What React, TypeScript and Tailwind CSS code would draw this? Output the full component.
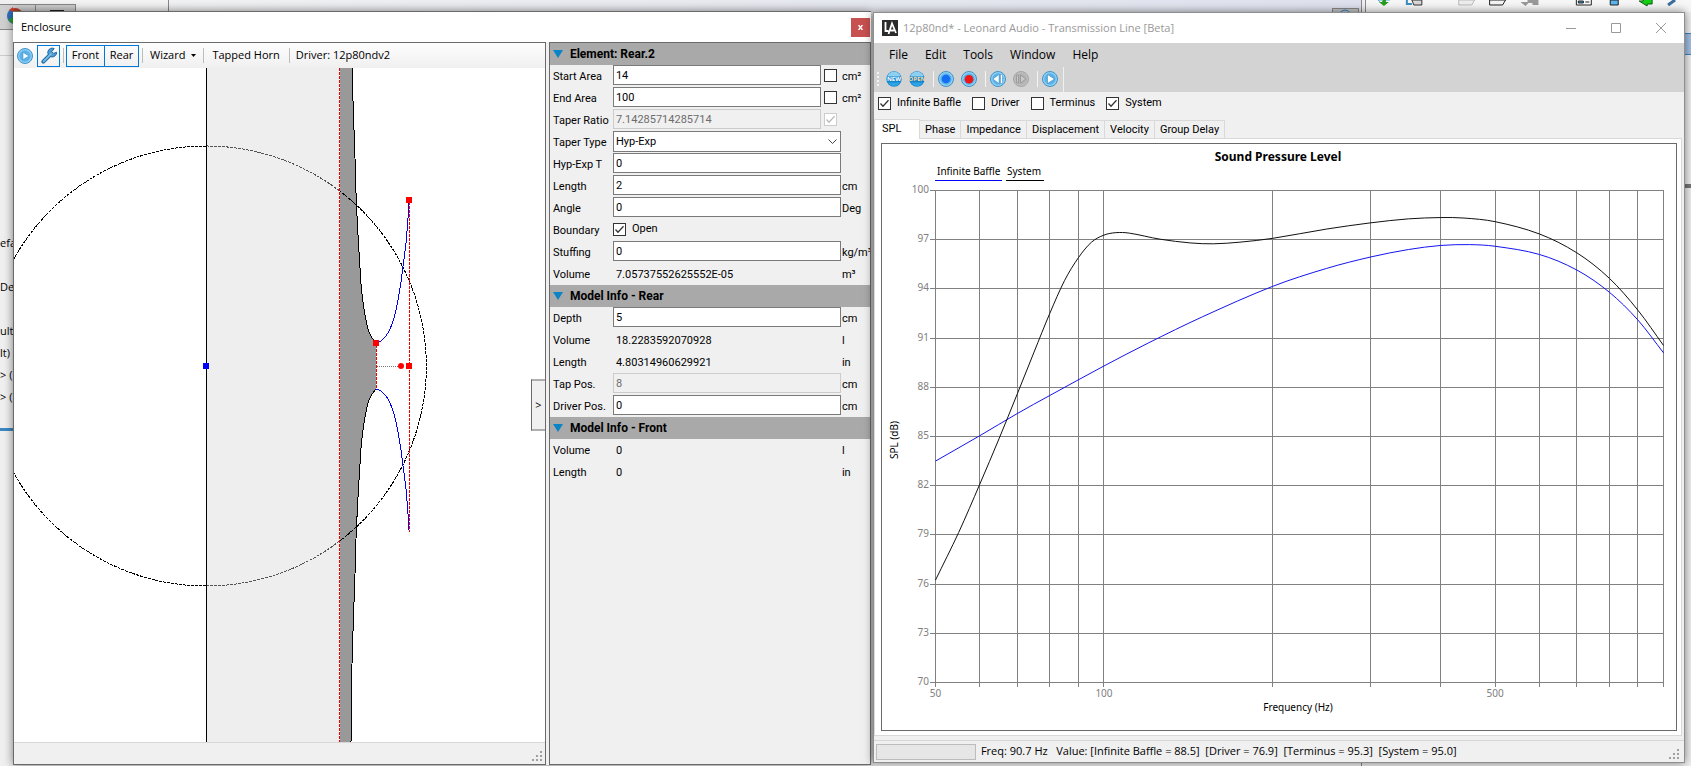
import React from 'react';

type Point = [number, number];

// smooth path through a list of points (Catmull-Rom)
function smooth(pts: Point[]) {
  let d = `M${pts[0][0]} ${pts[0][1]}`;
  for (let i = 0; i < pts.length - 1; i++) {
    const p0 = pts[i - 1] || pts[i];
    const p1 = pts[i];
    const p2 = pts[i + 1];
    const p3 = pts[i + 2] || p2;
    d += ` C${p1[0] + (p2[0] - p0[0]) / 6} ${p1[1] + (p2[1] - p0[1]) / 6} ${p2[0] - (p3[0] - p1[0]) / 6} ${p2[1] - (p3[1] - p1[1]) / 6} ${p2[0]} ${p2[1]}`;
  }
  return d;
}

// same idea for y = f(x) data with uneven steps in x
function smoothCurve(pts: Point[]) {
  const slope = pts.map((_, i) => {
    const a = pts[i - 1] || pts[i];
    const b = pts[i + 1] || pts[i];
    return (b[1] - a[1]) / (b[0] - a[0]);
  });
  let d = `M${pts[0][0]} ${pts[0][1]}`;
  for (let i = 0; i < pts.length - 1; i++) {
    const [x1, y1] = pts[i];
    const [x2, y2] = pts[i + 1];
    const h = (x2 - x1) / 3;
    d += ` C${x1 + h} ${y1 + slope[i] * h} ${x2 - h} ${y2 - slope[i + 1] * h} ${x2} ${y2}`;
  }
  return d;
}

/* ---------- shared controls ---------- */

interface CheckProps {
  id: string;
  checked?: boolean;
  disabled?: boolean;
  label?: string;
  ariaLabel?: string;
}

function Check({ id, checked, disabled, label, ariaLabel }: CheckProps) {
  return (
    <span className="flex items-center gap-[6px]">
      <span className="relative flex">
        <input
          id={id}
          type="checkbox"
          defaultChecked={checked}
          disabled={disabled}
          aria-label={ariaLabel}
          className="peer size-[13px] appearance-none border border-[#333] bg-white disabled:border-[#ccc]"
        />
        <svg viewBox="0 0 13 13" className="pointer-events-none absolute inset-0 hidden size-[13px] peer-checked:block">
          <path d="M2.5 6.5 L5 9.2 L10.5 3.3" fill="none" stroke={disabled ? '#bbb' : '#333'} strokeWidth="1.3" />
        </svg>
      </span>
      {label && <label htmlFor={id}>{label}</label>}
    </span>
  );
}

function Grip() {
  return (
    <svg width="11" height="11" viewBox="0 0 11 11" fill="#a0a0a0" shapeRendering="crispEdges">
      <path d="M8 0h2v2h-2zM4 4h2v2h-2zM8 4h2v2h-2zM0 8h2v2h-2zM4 8h2v2h-2zM8 8h2v2h-2z" />
    </svg>
  );
}

function Orb({ grey, children }: { grey?: boolean; children: React.ReactNode }) {
  return (
    <svg width="16" height="16" viewBox="0 0 16 16">
      <circle cx="8" cy="8" r="7.5" fill={grey ? '#bdbdbd' : '#8fd0f4'} stroke={grey ? '#a5a5a5' : '#3f93c9'} />
      <circle cx="8" cy="8" r="5.7" fill={grey ? '#b4b4b4' : '#5ab2e6'} />
      {children}
    </svg>
  );
}

function TextOrb({ text, color }: { text: string; color: string }) {
  return (
    <svg width="16" height="16" viewBox="0 0 16 16">
      <circle cx="8" cy="8" r="7.7" fill="#1585cc" />
      <path d="M1.2 5.5a7.2 7.2 0 0 1 13.6 0z" fill="#8fd0f0" />
      <path d="M2 11.5a7 7 0 0 0 12 0z" fill="#2fa4e4" />
      <text x="8" y="10" textAnchor="middle" fontSize="6" fontWeight="bold" fill={color}>{text}</text>
    </svg>
  );
}

/* ---------- enclosure window ---------- */

const hornUpper: Point[] = [[337, -78], [338, 0], [341, 90], [342, 125], [344, 167], [346, 200], [348, 226], [353, 257], [357, 268], [362, 275]];
const mouthUpper: Point[] = [[362, 275], [367, 273], [374, 265], [380, 250], [384, 232], [387, 214], [389, 198], [392, 175], [394, 150], [395, 134]];
const mirror = (pts: Point[]): Point[] => pts.map(([x, y]) => [x, 596 - y]);

function EnclosureDrawing() {
  const upper = smooth(hornUpper);
  const lower = smooth(mirror(hornUpper).reverse());
  return (
    <svg viewBox="0 0 531 674" preserveAspectRatio="xMinYMid slice" className="absolute inset-0 size-full" shapeRendering="crispEdges" fill="none">
      <rect x="192" y="-100" width="133" height="900" fill="#eeeeee" />
      <path d={`M326 -78 L337 -78 ${upper.replace('M', 'L')} L${lower.slice(1)} L326 675 Z`} fill="#999999" />
      <path d={upper} stroke="#000" />
      <path d={lower} stroke="#000" />
      <path d="M325 122.500 A220 220 0 0 1 325 473.500 M192 518 A220 220 0 0 1 192 78" stroke="#000" strokeDasharray="3 1" />
      <path d="M192 78 A220 220 0 0 1 325 122.500 M325 473.500 A220 220 0 0 1 192 518" stroke="#555" strokeDasharray="3 1" />
      <path d="M192.500 -100 V800" stroke="#000" />
      <path d="M325.500 -100 V800" stroke="#fff" />
      <path d="M325.500 -100 V800 M362.500 277 V321 M395.500 134 V464" stroke="#f00000" strokeDasharray="3 1" />
      <path d={smooth(mouthUpper)} stroke="#0000f0" />
      <path d={smooth(mirror(mouthUpper))} stroke="#0000f0" />
      <path d="M363 298.500 H385" stroke="#777" strokeDasharray="1 1" />
      <path d="M359 272h6v6h-6zM392 129h6v6h-6zM392 295h6v6h-6z" fill="#ff0000" />
      <circle cx="387" cy="298" r="3" fill="#ff0000" shapeRendering="auto" />
      <rect x="189" y="295" width="6" height="6" fill="#0000ff" />
    </svg>
  );
}

function Separator() {
  return <span className="h-[15px] w-px bg-[#bdbdbd]" />;
}

function EnclosureToolbar() {
  return (
    <div className="flex h-[25px] items-center bg-gradient-to-b from-[#fdfdfd] to-[#f0f0f0] pl-[3px] text-[11px]">
      <button aria-label="Run" className="mr-1">
        <Orb>
          <path d="M6 4.5 L12 8 L6 11.5Z" fill="#fff" stroke="#2f86bd" strokeWidth="0.5" />
        </Orb>
      </button>
      <button aria-label="Settings" className="mr-[3px] flex h-[22px] w-[23px] items-center justify-center border border-[#0078d7]">
        <svg width="18" height="18" viewBox="0 0 18 18">
          <path d="M3.3 14.7 L11 7" stroke="#1f6ba5" strokeWidth="4" strokeLinecap="round" />
          <path d="M14.2 1.6 A4.4 4.4 0 1 0 16.6 5.2 L13.6 6.4 L11.8 4.6 Z" fill="#4e9bd1" stroke="#1f6ba5" />
          <path d="M3.6 14.4 L11 7" stroke="#74b8e4" strokeWidth="2" strokeLinecap="round" />
        </svg>
      </button>
      <Separator />
      <button className="ml-[2px] h-[22px] w-[39px] border border-[#0078d7]">Front</button>
      <button className="-ml-px h-[22px] w-[35px] border border-[#0078d7]">Rear</button>
      <span className="w-[3px]" />
      <Separator />
      <button className="mx-[7px] flex items-center gap-[6px]">
        Wizard
        <svg width="5" height="3" viewBox="0 0 5 3"><path d="M0 0h5L2.5 3z" fill="#000" /></svg>
      </button>
      <Separator />
      <button className="mr-[9px] ml-2">Tapped Horn</button>
      <Separator />
      <span className="ml-[6px]">Driver: 12p80ndv2</span>
    </div>
  );
}

interface Field {
  label: string;
  value: string;
  unit?: string;
  kind?: 'input' | 'text' | 'select' | 'check';
  lock?: boolean;
  disabled?: boolean;
}

const elementFields: Field[] = [
  { label: 'Start Area', value: '14', unit: 'cm²', lock: true },
  { label: 'End Area', value: '100', unit: 'cm²', lock: true },
  { label: 'Taper Ratio', value: '7.14285714285714', lock: true, disabled: true },
  { label: 'Taper Type', value: 'Hyp-Exp', kind: 'select' },
  { label: 'Hyp-Exp T', value: '0' },
  { label: 'Length', value: '2', unit: 'cm' },
  { label: 'Angle', value: '0', unit: 'Deg' },
  { label: 'Boundary', value: 'Open', kind: 'check' },
  { label: 'Stuffing', value: '0', unit: 'kg/m³' },
  { label: 'Volume', value: '7.05737552625552E-05', unit: 'm³', kind: 'text' },
];

const rearFields: Field[] = [
  { label: 'Depth', value: '5', unit: 'cm' },
  { label: 'Volume', value: '18.2283592070928', unit: 'l', kind: 'text' },
  { label: 'Length', value: '4.80314960629921', unit: 'in', kind: 'text' },
  { label: 'Tap Pos.', value: '8', unit: 'cm', disabled: true },
  { label: 'Driver Pos.', value: '0', unit: 'cm' },
];

const frontFields: Field[] = [
  { label: 'Volume', value: '0', unit: 'l', kind: 'text' },
  { label: 'Length', value: '0', unit: 'in', kind: 'text' },
];

function FieldRow({ field, group }: { field: Field; group: string }) {
  const id = `${group}-${field.label.replace(/[^A-Za-z]/g, '').toLowerCase()}`;
  const kind = field.kind || 'input';
  return (
    <div className="grid h-[22px] grid-cols-[63px_1fr_29px] whitespace-nowrap">
      {kind === 'text' ? (
        <span className="pt-[5px] pl-[3px]">{field.label}</span>
      ) : (
        <label htmlFor={id} className="pt-[5px] pl-[3px]">{field.label}</label>
      )}
      <div className="flex min-w-0 items-start gap-[3px]">
        {kind === 'input' && (
          <input
            id={id}
            defaultValue={field.value}
            disabled={field.disabled}
            className="h-5 min-w-0 flex-1 border border-[#7a7a7a] bg-white px-[2px] disabled:border-[#ccc] disabled:bg-[#f0f0f0] disabled:text-[#6d6d6d]"
          />
        )}
        {field.lock && (
          <span className="mr-[4px] pt-1">
            <Check id={`${id}-lock`} ariaLabel={`Lock ${field.label}`} checked={field.disabled} disabled={field.disabled} />
          </span>
        )}
        {kind === 'select' && (
          <span className="relative flex-1">
            <select id={id} className="block h-[21px] w-full appearance-none border border-[#7a7a7a] bg-white px-[2px]">
              <option>{field.value}</option>
            </select>
            <svg width="9" height="6" viewBox="0 0 9 6" className="pointer-events-none absolute top-2 right-1">
              <path d="M0.5 0.5 L4.5 4.5 L8.5 0.5" fill="none" stroke="#444" />
            </svg>
          </span>
        )}
        {kind === 'check' && <span className="pt-[3px]"><Check id={id} checked label={field.value} /></span>}
        {kind === 'text' && <span className="pt-[5px] pl-[3px]">{field.value}</span>}
      </div>
      <span className="pt-[5px] pl-px">{field.unit}</span>
    </div>
  );
}

function Section({ title, fields, group }: { title: string; fields: Field[]; group: string }) {
  return (
    <section>
      <h2 className="flex h-[22px] items-center gap-[7px] bg-[#a9a9a9] pl-[3px] text-[12px] font-bold">
        <svg width="10" height="8" viewBox="0 0 10 8"><path d="M0 0h10L5 8z" fill="#0b84c6" /></svg>
        {title}
      </h2>
      {fields.map((f) => <FieldRow key={f.label} field={f} group={group} />)}
    </section>
  );
}

function EnclosureWindow() {
  return (
    <section className="flex min-w-0 flex-[860] flex-col border-t border-[#6a6a6a] bg-[#f0f0f0] shadow-[0_0_9px_rgba(0,0,0,0.5)]">
      <header className="flex h-[30px] shrink-0 items-center justify-between bg-white pl-2 text-[11px]">
        <h1>Enclosure</h1>
        <button aria-label="Close" className="mr-px flex size-[19px] items-center justify-center bg-[#c75050] text-white">
          <svg width="5" height="5" viewBox="0 0 5 5"><path d="M0.5 0 L4.5 5 M4.5 0 L0.5 5" stroke="#fff" strokeWidth="1.4" /></svg>
        </button>
      </header>
      <div className="flex min-h-0 flex-1 gap-[3px]">
        <div className="flex min-w-0 flex-1 flex-col border border-[#6a6a6a]">
          <EnclosureToolbar />
          <div className="relative min-h-0 flex-1 overflow-hidden bg-white">
            <EnclosureDrawing />
            <button className="absolute top-1/2 right-0 h-[51px] w-[14px] -translate-y-1/2 border border-r-0 border-[#6a6a6a] bg-[#f0f0f0] text-[11px]">&gt;</button>
          </div>
          <div className="flex h-[22px] items-end justify-end border-t border-[#d7d7d7] pr-[2px] pb-[2px]">
            <Grip />
          </div>
        </div>
        <div className="w-[322px] overflow-hidden border border-[#6a6a6a] font-['Roboto',sans-serif] text-[11px] leading-[14px]">
          <Section title="Element: Rear.2" fields={elementFields} group="element" />
          <Section title="Model Info - Rear" fields={rearFields} group="rear" />
          <Section title="Model Info - Front" fields={frontFields} group="front" />
        </div>
      </div>
    </section>
  );
}

/* ---------- transmission line window ---------- */

const infiniteBaffle: Point[] = [
  [50, 83.5], [60, 85.05], [70, 86.4], [80, 87.5], [100, 89.3], [120, 90.7], [150, 92.3], [200, 94.15], [250, 95.25], [300, 95.95],
  [350, 96.4], [400, 96.65], [450, 96.7], [500, 96.6], [600, 96.1], [700, 95.15], [800, 93.8], [900, 92.1], [1000, 90.1],
];
const system: Point[] = [
  [50, 76.25], [55, 79.15], [60, 82.1], [65, 84.9], [70, 87.6], [75, 90.15], [80, 92.5], [85, 94.5], [90, 95.9], [95, 96.85], [100, 97.28],
  [105, 97.43], [111, 97.4], [126, 97.03], [143, 96.8], [157, 96.75], [175, 96.85], [200, 97.08], [250, 97.65], [300, 98.03], [350, 98.27],
  [400, 98.35], [440, 98.32], [500, 98.1], [600, 97.35], [700, 96.2], [800, 94.65], [900, 92.7], [1000, 90.55],
];
const freqLines = [50, 60, 70, 80, 90, 100, 200, 300, 400, 500, 600, 700, 800, 900, 1000];
const dbLines = [100, 97, 94, 91, 88, 85, 82, 79, 76, 73, 70];

const fx = (f: number) => 53.5 + (728 * Math.log(f / 50)) / Math.log(20);
const dy = (db: number) => 46.5 + (100 - db) * 16.4;
const snap = (v: number) => Math.floor(v) + 0.5;
const toPlot = (pts: Point[]): Point[] => pts.map(([f, db]) => [fx(f), dy(db)]);

function SplChart() {
  return (
    <svg viewBox="0 0 794 586" className="absolute inset-0 size-full font-['Noto_Sans',sans-serif]">
      <text x="396" y="17" textAnchor="middle" fontSize="12" fontWeight="700">Sound Pressure Level</text>
      <text x="55" y="31" fontSize="10">Infinite Baffle</text>
      <text x="125" y="31" fontSize="10">System</text>
      <path d="M53 36.500 H120" stroke="#00f" />
      <path d="M124 36.500 H162" stroke="#000" />
      <g stroke="#808080" shapeRendering="crispEdges">
        {dbLines.map((db) => <path key={db} d={`M48 ${snap(dy(db))} H782`} />)}
        {freqLines.map((f) => <path key={f} d={`M${snap(fx(f))} 46 V543`} />)}
      </g>
      <g fill="#808080" fontSize="10">
        {dbLines.map((db) => <text key={db} x="47" y={snap(dy(db)) + 2} textAnchor="end">{db}</text>)}
        {[50, 100, 500].map((f) => <text key={f} x={fx(f)} y="553" textAnchor="middle">{f}</text>)}
      </g>
      <path d={smoothCurve(toPlot(infiniteBaffle))} fill="none" stroke="#1414f0" />
      <path d={smoothCurve(toPlot(system))} fill="none" stroke="#111" />
      <text x="416" y="567" textAnchor="middle" fontSize="10">Frequency (Hz)</text>
      <text transform="translate(16 296) rotate(-90)" textAnchor="middle" fontSize="10">SPL (dB)</text>
    </svg>
  );
}

function ToolSep() {
  return <span className="h-4 w-px bg-[#f4f4f4]" />;
}

function AudioWindow() {
  const tabs = ['Phase', 'Impedance', 'Displacement', 'Velocity', 'Group Delay'];
  return (
    <section className="mt-px mb-[2px] flex min-w-0 flex-[812] flex-col border border-[#8e8e8e] bg-[#f0f0f0] shadow-[0_0_9px_rgba(0,0,0,0.5)]">
      <header className="flex h-[30px] shrink-0 items-center bg-white pl-2 text-[11px] text-[#999]">
        <svg width="16" height="16" viewBox="0 0 16 16" className="mr-[5px]">
          <rect width="16" height="16" fill="#2b2b2b" />
          <path d="M3.5 2 V11 H6.500 M6.500 14 L10 3.500 L14 13 M8.500 10.500 H12" fill="none" stroke="#fff" strokeWidth="1.8" />
        </svg>
        <h1 className="flex-1">12p80nd* - Leonard Audio - Transmission Line [Beta]</h1>
        <div className="flex gap-[35px] pr-[18px]">
          <button aria-label="Minimize"><svg width="10" height="11" viewBox="0 0 10 11"><path d="M0 5.500H10" stroke="#999" /></svg></button>
          <button aria-label="Maximize"><svg width="10" height="11" viewBox="0 0 10 11"><path d="M0.500 0.500h9v9h-9z" fill="none" stroke="#999" /></svg></button>
          <button aria-label="Close"><svg width="10" height="11" viewBox="0 0 10 11"><path d="M0 0L10 10M10 0L0 10" stroke="#999" /></svg></button>
        </div>
      </header>

      {/* menu + toolbar */}
      <div className="shrink-0 bg-[#d3d3d3]">
        <nav className="flex h-6 items-center gap-[17px] pl-[15px] text-[12px]">
          {['File', 'Edit', 'Tools', 'Window', 'Help'].map((m) => <button key={m}>{m}</button>)}
        </nav>
        <div className="flex h-[25px] w-[190px] items-center border-r border-[#f0f0f0] pb-[2px] pl-[3px]">
          <svg width="3" height="16" viewBox="0 0 3 16" className="mr-[6px]" fill="#f4f4f4"><path d="M0 1h2v2H0zM0 5h2v2H0zM0 9h2v2H0zM0 13h2v2H0z" /></svg>
          <button aria-label="New" className="mr-[7px]"><TextOrb text="NEW" color="#fff" /></button>
          <button aria-label="Open" className="mr-2"><TextOrb text="OPEN" color="#ffd9a0" /></button>
          <ToolSep />
          <button aria-label="Snapshot" className="mx-1"><Orb><circle cx="8" cy="8" r="4.3" fill="#146ef5" /></Orb></button>
          <button aria-label="Record" className="mr-2 ml-[3px]"><Orb><circle cx="8" cy="8.3" r="4.3" fill="#f01414" /></Orb></button>
          <ToolSep />
          <button aria-label="Back" className="mx-1">
            <Orb><path d="M9 3.5V12.5L3 8Z M10.5 3.5h2v9h-2z" fill="#fff" stroke="#2878b0" strokeWidth="0.4" /></Orb>
          </button>
          <button aria-label="Forward" disabled className="mr-2 ml-[3px]">
            <Orb grey><path d="M7.5 4V12L13 8Z M3.5 4h2v8h-2z" fill="#c8c8c8" stroke="#8c8c8c" strokeWidth="0.7" /></Orb>
          </button>
          <ToolSep />
          <button aria-label="Play" className="mx-1">
            <Orb><path d="M5.5 3.5 L12.5 8 L5.5 12.5Z" fill="#fff" stroke="#2878b0" strokeWidth="0.5" /></Orb>
          </button>
        </div>
      </div>

      <div className="flex h-[26px] shrink-0 items-end gap-[11px] pb-2 pl-1 font-['Roboto',sans-serif] text-[11px] leading-[14px]">
        <Check id="show-baffle" checked label="Infinite Baffle" />
        <Check id="show-driver" label="Driver" />
        <Check id="show-terminus" label="Terminus" />
        <Check id="show-system" checked label="System" />
      </div>

      {/* tabs */}
      <div role="tablist" className="flex shrink-0 items-end font-['Roboto',sans-serif] text-[11px]">
        <button role="tab" aria-selected="true" className="relative top-px h-5 w-[46px] border border-b-0 border-[#d9d9d9] bg-white pl-[7px] text-left">SPL</button>
        {tabs.map((t) => (
          <button key={t} role="tab" aria-selected="false" className="h-[18px] border border-b-0 border-l-0 border-[#d9d9d9] px-[5px] pt-px">{t}</button>
        ))}
      </div>
      <div className="mr-[2px] flex min-h-0 flex-1 border border-[#d9d9d9] bg-white p-[4px] pl-[6px]">
        <div className="relative min-w-0 flex-1 border border-[#6a6a6a]">
          <SplChart />
        </div>
      </div>

      <footer className="mt-1 flex h-[22px] shrink-0 items-center border-t border-[#d7d7d7] pl-[2px] text-[11px]">
        <div role="progressbar" aria-label="Progress" className="mr-[5px] h-4 w-[100px] border border-[#bcbcbc] bg-[#e6e6e6]" />
        <span className="flex-1 whitespace-pre">{'Freq: 90.7 Hz   Value: [Infinite Baffle = 88.5]  [Driver = 76.9]  [Terminus = 95.3]  [System = 95.0]'}</span>
        <span className="mr-1 self-end pb-[2px]"><Grip /></span>
      </footer>
    </section>
  );
}

/* ---------- windows behind ---------- */

function Backdrop() {
  return (
    <div className="absolute inset-0 flex overflow-hidden bg-[#f0f0f0]">
      <div className="w-[13px] shrink-0 text-[11px] leading-[22px] whitespace-nowrap">
        <div className="mt-1 h-[26px] border-y border-[#888] bg-[#d0d0d0]">
          <svg width="13" height="24" viewBox="0 0 13 24">
            <circle cx="15" cy="11" r="8" fill="#2f6fc0" />
            <path d="M8 15l5-3v7z" fill="#2fa030" />
            <path d="M9 5l4-3v5z" fill="#d04030" />
          </svg>
        </div>
        <div className="h-[26px] border-b border-[#ccc]" />
        <p className="mt-[176px]">efa</p>
        <p className="mt-[22px]">De</p>
        <p className="mt-[22px]">ult</p>
        <p>lt)</p>
        <p>&gt; (</p>
        <p>&gt; (</p>
        <div className="mt-[20px] h-[3px] bg-[#3c88c4]" />
      </div>
      <div className="min-w-0 flex-1">
        <div className="flex h-[12px] bg-gradient-to-r from-[#f4f4f4] to-[#dfe2ee]">
          <div className="mt-1 w-[63px] border-t border-r border-[#888] bg-[#d0d0d0]">
            <svg width="62" height="8" viewBox="0 0 62 8">
              <circle cx="2" cy="11" r="8" fill="#b8402a" />
              <path d="M22.500 0V8" stroke="#888" />
              <path d="M37 5h14v4h-14z" fill="#222" />
            </svg>
          </div>
          <div className="w-[93px] border-r border-[#888] bg-[#f4f4f4]" />
          <div className="mt-2 mr-[2px] ml-auto w-[27px] border border-b-0 border-[#888] bg-[#c8c8c8]">
            <svg width="25" height="4" viewBox="0 0 25 4"><circle cx="12" cy="7" r="6" fill="#a9c4e0" stroke="#3f7fb5" /></svg>
          </div>
        </div>
      </div>
      <div className="w-[330px] shrink-0 border-l border-[#888] bg-[#f0f0f0]">
        <svg width="326" height="12" viewBox="0 0 326 12" className="ml-[3px] border-l border-[#888] bg-[#f7f7f7]">
          <path d="M12 0h12M12 0l3 3h6" fill="none" stroke="#4ab0e0" />
          <path d="M17 0h3v2h3l-5 4l-5-4h3z" fill="#2a9a20" />
          <path d="M41 0v4h5" fill="none" stroke="#3a8fc0" strokeWidth="2" />
          <path d="M46 0h10v5h-8z" fill="#d8d8d8" stroke="#333" />
          <path d="M93 0h16l-3 5h-13z" fill="#eee" stroke="#bbb" />
          <path d="M124 0h16l-3 5h-13z" fill="#f4f4f4" stroke="#222" />
          <path d="M155 2h7v-2h11v5h-6v-2h-4l-3 3z" fill="#999" />
          <path d="M211 0v5h15v-5" fill="#fff" stroke="#222" />
          <path d="M213 1h5v2h-5zM220 2h4" fill="#3b9ad9" stroke="#222" />
          <path d="M245 0h8v5h-8z" fill="#5bb5ee" stroke="#222" />
          <path d="M274 1h4v-2h9v5h-5v2z" fill="#12d012" stroke="#145a14" />
          <path d="M303 5l7-5" stroke="#3a6ea0" strokeWidth="3" />
        </svg>
        <div className="mt-[21px] ml-[322px] h-[22px] border-y border-[#3c88c4] bg-[#a3c0e6]" />
        <div className="mt-[129px] h-1 bg-[#777]" />
      </div>
    </div>
  );
}

export default function App() {
  return (
    <main className="relative flex h-screen min-h-[600px] overflow-hidden pt-[11px] pr-[6px] pb-px pl-[13px] font-['Open_Sans',sans-serif] text-black">
      <Backdrop />
      <div className="relative flex min-w-0 flex-1 gap-[2px]">
        <EnclosureWindow />
        <AudioWindow />
      </div>
    </main>
  );
}
